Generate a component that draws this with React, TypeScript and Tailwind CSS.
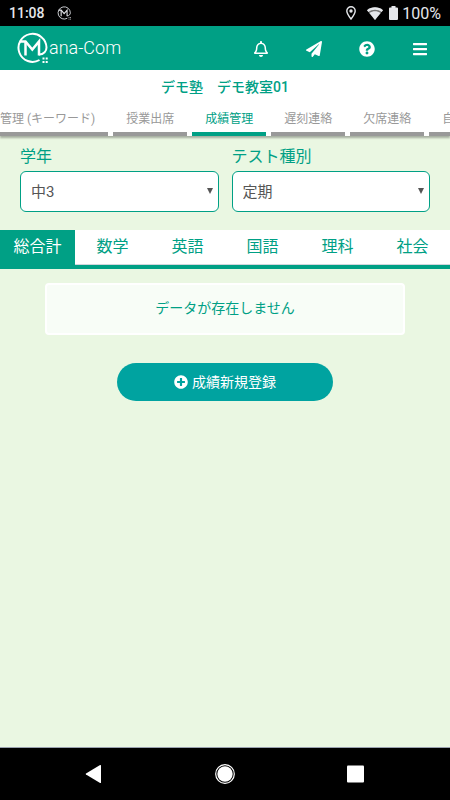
import React, { useState } from 'react'
import { FaBars, FaPaperPlane, FaPlusCircle, FaQuestionCircle, FaRegBell } from 'react-icons/fa'

const menuTabs = ['授業出席', '成績管理', '遅刻連絡', '欠席連絡', '自']
const subjects = ['総合計', '数学', '英語', '国語', '理科', '社会']

function LogoMark({ className }: { className?: string }) {
  return (
    <svg viewBox="0 0 32 32" className={className} fill="none" stroke="currentColor" aria-hidden="true">
      <path d="M23 22.5 C28 22.5 30.5 19 30.5 15.5 A14 14 0 1 0 23.5 28" strokeWidth="2" />
      <path d="M4 9.5 H9.5 L16.3 17.5 L23 9.5 V23.5" strokeWidth="2.5" />
      <path d="M9.5 9 V23.5" strokeWidth="2.5" />
      <path d="M26.5 25.5h2v2h-2zM29.7 25.5h2v2h-2zM26.500 29h2v2h-2zM29.700 29h2v2h-2z" fill="currentColor" stroke="none" />
    </svg>
  )
}

function StatusBar() {
  return (
    <div className="flex h-[26px] items-center justify-between bg-black px-[9px] font-['Roboto',sans-serif] text-base text-gray-200">
      <div className="flex items-center gap-3">
        <span className="text-sm font-medium">11:08</span>
        <LogoMark className="h-[14px] w-[14px]" />
      </div>
      <div className="flex items-center">
        <svg viewBox="0 0 10 14" className="mr-[11px] h-[14px] w-[10px]" fill="none" stroke="currentColor" strokeWidth="1.4">
          <path d="M5 13 C2.5 9.8 .8 7.3 .8 5 a4.2 4.2 0 0 1 8.4 0 C9.2 7.3 7.5 9.8 5 13z" />
          <circle cx="5" cy="5" r="1.7" fill="currentColor" stroke="none" />
        </svg>
        <svg viewBox="0 0 16 13" className="mr-[6px] h-[13px] w-4">
          <path d="M0 3.2 C4.6 -.6 11.4 -.6 16 3.2 L8 13z" fill="#777" />
          <path d="M0 3.2 C4.6 -.6 11.4 -.6 16 3.2 L14.6 4.9 C10.8 2 5.2 2 1.4 4.9z" fill="currentColor" />
          <path d="M2.4 6.1 C5.8 3.6 10.2 3.6 13.6 6.1 L8 13z" fill="currentColor" />
        </svg>
        <svg viewBox="0 0 9 14" className="mr-1 h-[14px] w-[9px]" fill="currentColor">
          <path d="M2.5 0h4v1.4h1.5a1 1 0 0 1 1 1V13a1 1 0 0 1-1 1H1a1 1 0 0 1-1-1V2.4a1 1 0 0 1 1-1h1.5z" />
        </svg>
        <span className="pt-px">100%</span>
      </div>
    </div>
  )
}

function Header() {
  return (
    <header className="flex h-11 items-center justify-between bg-[#00a085] pr-[22px] pl-4 text-white">
      <a href="#" className="flex items-center gap-px">
        <LogoMark className="h-8 w-8" />
        <span className="font-['Roboto',sans-serif] text-lg font-light">ana-Com</span>
      </a>
      <nav className="flex items-center gap-[37px] pt-[2px]">
        <button aria-label="お知らせ"><FaRegBell className="h-4 w-4" /></button>
        <button aria-label="送信"><FaPaperPlane className="h-4 w-4" /></button>
        <button aria-label="ヘルプ"><FaQuestionCircle className="h-4 w-4" /></button>
        <button aria-label="メニュー"><FaBars className="h-4 w-4" /></button>
      </nav>
    </header>
  )
}

type FieldProps = { id: string; label: string; options: string[] }

function SelectField({ id, label, options }: FieldProps) {
  return (
    <div className="flex-1">
      <label htmlFor={id} className="block text-base leading-6 text-[#00a085]">{label}</label>
      <div className="relative mt-[2px]">
        <select
          id={id}
          className="block h-[41px] w-full appearance-none rounded-md border border-[#00a085] bg-white px-[10px] pt-[2px] text-[15px] text-[#555]"
        >
          {options.map((o) => <option key={o}>{o}</option>)}
        </select>
        <svg viewBox="0 0 6 6" className="pointer-events-none absolute top-[17px] right-[6px] h-[6px] w-[6px]" fill="#555">
          <path d="M0 0h6L3 6z" />
        </svg>
      </div>
    </div>
  )
}

export default function App() {
  const [menu, setMenu] = useState('成績管理')
  const [subject, setSubject] = useState('総合計')

  return (
    <div className="flex min-h-screen flex-col bg-[#eaf7e2] font-['Roboto','Noto_Sans_CJK_JP',sans-serif]">
      <StatusBar />
      <Header />

      <div className="bg-white shadow-[0_2px_2px_rgba(0,0,0,0.3)]">
        <h1 className="pt-[7px] text-center text-sm leading-5 font-medium text-[#00a085]">デモ塾　デモ教室01</h1>
        <nav className="mt-[10px] flex gap-[5px] overflow-hidden text-xs leading-6 whitespace-nowrap">
          <button className="shrink-0 border-b-4 border-[#999] pr-[13px] pb-px text-[#999]">管理 (キーワード)</button>
          {menuTabs.map((t) => (
            <button
              key={t}
              onClick={() => setMenu(t)}
              className={`shrink-0 border-b-4 px-[13px] pb-px ${t === menu ? 'border-[#00a085] text-[#00a085]' : 'border-[#999] text-[#999]'}`}
            >
              {t}
            </button>
          ))}
        </nav>
      </div>

      <main className="flex-1">
        <div className="flex gap-[13px] px-5 pt-[9px]">
          <SelectField id="grade" label="学年" options={['中3', '中2', '中1']} />
          <SelectField id="kind" label="テスト種別" options={['定期', '模試']} />
        </div>

        <div className="mt-[18px] grid grid-cols-6 border-b-4 border-[#00a085] bg-white">
          {subjects.map((s) => (
            <button
              key={s}
              onClick={() => setSubject(s)}
              className={`h-[35px] border-b text-base ${s === subject ? 'border-[#00a085] bg-[#00a085] text-white' : 'border-gray-300 text-[#00a085]'}`}
            >
              {s}
            </button>
          ))}
        </div>

        <p className="mx-[10%] mt-[14px] rounded border-2 border-white bg-[#f8fdf7] pt-[13px] pb-[15px] text-center text-sm text-[#00a085]">
          データが存在しません
        </p>

        <button className="mx-auto mt-7 flex h-[38px] w-[48%] items-center justify-center gap-1 rounded-full bg-[#00a3a0] text-sm text-white">
          <FaPlusCircle />
          成績新規登録
        </button>
      </main>

      <footer className="flex h-[53px] items-center justify-around border-t border-gray-400 bg-black px-7 text-white">
        <button aria-label="戻る">
          <svg viewBox="0 0 20 20" className="h-5 w-5" fill="currentColor">
            <path d="M17 1.6v16.8a.6.6 0 0 1-.9.5L2 10.5a.6.6 0 0 1 0-1L16.1 1.1a.6.6 0 0 1 .9.5z" />
          </svg>
        </button>
        <button aria-label="ホーム">
          <svg viewBox="0 0 20 20" className="h-5 w-5">
            <circle cx="10" cy="10" r="9.3" fill="none" stroke="currentColor" strokeWidth="1.2" />
            <circle cx="10" cy="10" r="7.7" fill="currentColor" />
          </svg>
        </button>
        <button aria-label="履歴">
          <svg viewBox="0 0 20 20" className="h-5 w-5" fill="currentColor">
            <rect x="1" y="1.500" width="17" height="17" rx="1" />
          </svg>
        </button>
      </footer>
    </div>
  )
}
